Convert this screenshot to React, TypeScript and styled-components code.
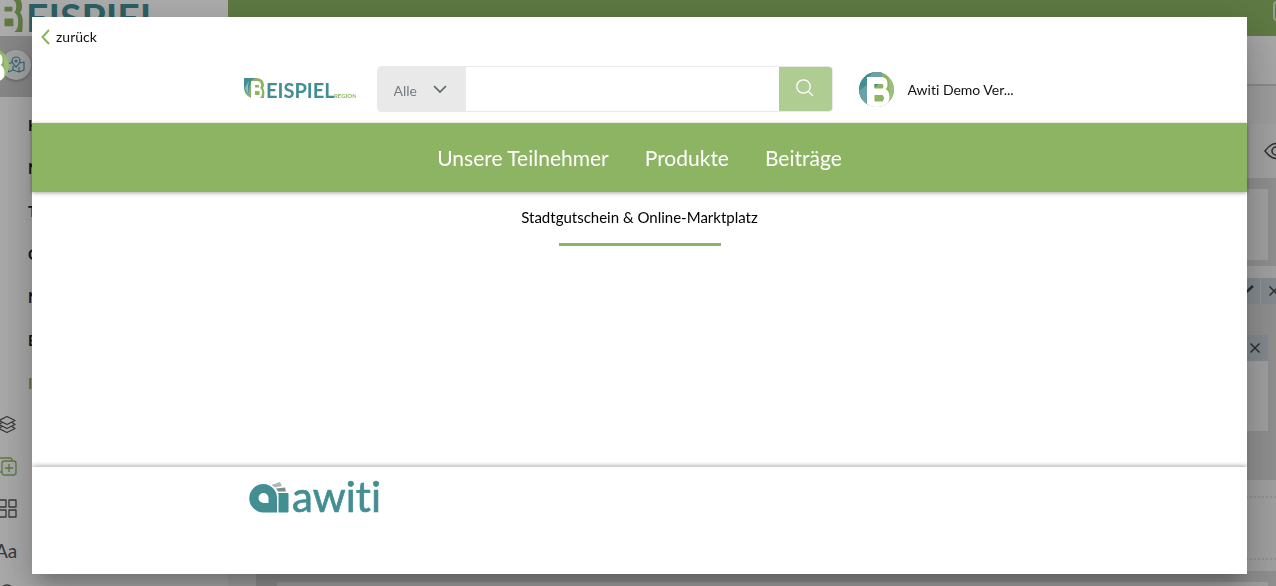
import React, { useId } from "react";
import styled, { createGlobalStyle } from "styled-components";

const GREEN = "#8cb463";
const TEAL = "#438e93";

const GlobalStyle = createGlobalStyle`
  *, *::before, *::after { box-sizing: border-box; }
  html, body, #root { height: 100%; }
  body {
    margin: 0;
    overflow: hidden;
    font-family: Lato, "Noto Sans", sans-serif;
    font-variant-ligatures: none;
    color: #111;
    background: #fff;
  }
  button, input, select { font: inherit; color: inherit; }
  a { color: inherit; text-decoration: none; }
`;

/* ---------- page behind the dialog ---------- */

const Page = styled.div`
  height: 100vh;
  overflow: hidden;
  display: flex;
  flex-direction: column;
`;

const TopBar = styled.div`
  display: flex;
  flex: 0 0 36px;
  overflow: hidden;
  background: ${GREEN};
  justify-content: space-between;
  box-shadow: 0 1px 2px rgba(0, 0, 0, 0.3);
`;

const TopLogo = styled.div`
  width: 228px;
  height: 36px;
  overflow: hidden;
  background: #fff;
  svg { display: block; margin: -7px 0 0 -17px; }
`;

const TopAction = styled.button`
  width: 24px;
  height: 20px;
  margin: 1px -21px 0 0;
  border: 2px solid #dde6d4;
  border-radius: 4px;
  background: none;
`;

const Body = styled.div`
  display: flex;
  flex: 1;
  min-height: 0;
`;

const Sidebar = styled.div`
  flex: 0 0 228px;
  display: flex;
  flex-direction: column;
  overflow: hidden;
  background: #fcfcfc;
`;

const Profile = styled.div`
  display: flex;
  align-items: center;
  flex: 0 0 61px;
  background: #c9c9c9;
  padding-bottom: 3px;
`;

const ProfileLogo = styled.div`
  margin-left: -26px;
  height: 35px;
  z-index: 1;
`;

const MapButton = styled.button`
  display: flex;
  align-items: center;
  justify-content: center;
  width: 30px;
  height: 30px;
  margin-left: -8px;
  padding: 0;
  border: 0;
  border-radius: 50%;
  background: #f4f4f4;
  box-shadow: 0 1px 3px rgba(0, 0, 0, 0.3);
`;

const SideContent = styled.div`
  display: flex;
  padding-top: 7px;
`;

const Rail = styled.div`
  display: flex;
  flex-direction: column;
  align-items: center;
  width: 20px;
  margin-left: -2px;
  padding-top: 310px;
  gap: 20px;
  svg { flex: 0 0 22px; }
`;

const Menu = styled.nav`
  display: flex;
  flex-direction: column;
  margin-left: 10px;
  font-size: 15px;
  font-weight: 700;
`;

const MenuLink = styled.a<{ $active?: boolean }>`
  line-height: 43px;
  color: ${(p) => (p.$active ? GREEN : "#222")};
`;

const Main = styled.div`
  flex: 1;
  display: flex;
  flex-direction: column;
  border-left: 9px solid #f2f2f2;
  background: #f2f2f2;
`;

const Band = styled.div<{ $h: number; $bg: string; $line?: boolean }>`
  display: flex;
  flex: 0 0 ${(p) => p.$h}px;
  align-items: center;
  justify-content: flex-end;
  background: ${(p) => p.$bg};
  border-bottom: ${(p) => (p.$line ? "2px solid #cfcfcf" : "0")};
`;

const EyeIcon = styled.svg`
  margin-right: -12px;
`;

const Canvas = styled.div<{ $h: number }>`
  flex: 0 0 ${(p) => p.$h}px;
  display: flex;
  flex-direction: column;
  padding: 11px 8px 6px 21px;
  margin-left: 19px;
  background: #d6d6d6;
`;

const Block = styled.div<{ $below?: number }>`
  flex: 1;
  margin-bottom: ${(p) => p.$below ?? 0}px;
  background: #efefef;
`;

const Tools = styled.div<{ $inset?: boolean }>`
  display: flex;
  flex: 0 0 26px;
  justify-content: flex-end;
  margin-top: ${(p) => (p.$inset ? "20px" : "0")};
  background: #c6ced6;
`;

const ToolButton = styled.button<{ $clip?: boolean }>`
  display: flex;
  align-items: center;
  justify-content: center;
  width: 26px;
  height: 26px;
  padding: 0;
  margin-right: ${(p) => (p.$clip ? "-10px" : "0")};
  border: 0;
  border-left: ${(p) => (p.$clip ? "1px solid #dfe4e8" : "0")};
  background: none;
`;

const Slot = styled.div`
  flex: 0 0 91px;
  padding: 16px 0 11px;
  background: #eee;
  div { height: 64px; border: 2px dotted #d8d8d8; border-width: 2px 0; }
`;

/* ---------- dialog ---------- */

const Backdrop = styled.div`
  position: fixed;
  inset: 0;
  display: flex;
  padding: 17px 29px 12px 32px;
  background: rgba(0, 0, 0, 0.32);
`;

const Dialog = styled.div`
  flex: 1;
  display: flex;
  flex-direction: column;
  min-width: 0;
  background: #fff;
  box-shadow: 0 11px 15px -7px rgba(0, 0, 0, 0.2),
    0 24px 38px 3px rgba(0, 0, 0, 0.14), 0 9px 46px 8px rgba(0, 0, 0, 0.12);
`;

const Back = styled.button`
  display: flex;
  align-items: center;
  align-self: flex-start;
  gap: 6px;
  height: 38px;
  padding: 1px 9px 0;
  border: 0;
  background: none;
  font-size: 14px;
`;

const Header = styled.header`
  display: flex;
  align-items: center;
  width: 100%;
  max-width: 792px;
  height: 68px;
  margin: 0 auto;
`;

const Brand = styled.a`
  display: block;
  height: 22px;
`;

const Search = styled.form`
  display: flex;
  width: 456px;
  height: 46px;
  margin: 0 26px 0 21px;
  border: 1px solid #eaeaea;
  border-radius: 4px;
  overflow: hidden;
`;

const SelectWrap = styled.label`
  display: flex;
  align-items: center;
  width: 88px;
  background: #e9e9e9;
  svg { margin-left: -33px; pointer-events: none; }
`;

const Select = styled.select`
  appearance: none;
  width: 88px;
  height: 44px;
  padding: 2px 0 0 16px;
  border: 0;
  background: none;
  color: #777c80;
  font-size: 14px;
`;

const Field = styled.input`
  flex: 1;
  min-width: 0;
  padding: 0 12px;
  border: 0;
  outline: 0;
`;

const SearchButton = styled.button`
  display: flex;
  align-items: center;
  justify-content: center;
  width: 53px;
  padding: 0 0 3px;
  border: 0;
  background: #afcc92;
`;

const Account = styled.a`
  display: flex;
  align-items: center;
  gap: 14px;
  padding-top: 1px;
  font-size: 14px;
  white-space: nowrap;
`;

const Nav = styled.nav`
  display: flex;
  justify-content: center;
  align-items: center;
  gap: 36px;
  flex: 0 0 69px;
  background: ${GREEN};
  box-shadow: 0 1px 4px rgba(0, 0, 0, 0.35);
  color: #fff;
  font-size: 21px;
`;

const Content = styled.main`
  flex: 1;
  display: flex;
  flex-direction: column;
  align-items: center;
`;

const Title = styled.h1`
  margin: 0;
  padding-top: 14px;
  font-size: 15px;
  line-height: 22px;
  font-weight: 400;
  color: #000;
`;

const Rule = styled.hr`
  width: 162px;
  height: 3px;
  margin: 15px 0 0;
  border: 0;
  background: ${GREEN};
`;

const Footer = styled.footer`
  flex: 0 0 107px;
  padding-top: 12px;
  box-shadow: 0 -1px 5px rgba(0, 0, 0, 0.35);
  clip-path: inset(-8px 0 0 0);
`;

const FooterInner = styled.div`
  width: 100%;
  max-width: 792px;
  margin: 0 auto;
  padding-left: 5px;
`;

/* ---------- drawings ---------- */

const RegionLogo = ({ width }: { width: number }) => (
  <svg width={width} height={Math.round((width * 22) / 112)} viewBox="0 0 112 22" aria-label="Beispiel Region">
    <path d="M0 0h13q7 1 7 7q0 2-1 3q2 2 1 10H7Q0 17 0 9z" fill={GREEN} />
    <path d="M0 0h12Q5 1 5 17Q0 14 0 8z" fill={TEAL} />
    <path d="M5 3Q3 8 5 17Q2 14 1 10z" fill="#91bfc1" />
    <path d="M7 3h6q4 0 4 4q0 2-1 3q2 1 2 5q0 5-4 6v1H7z" fill="#fff" />
    <path d="M11 7h4v2.500h-4zM11 13h4.500v4h-4.500z" fill={GREEN} />
    <text x="22" y="20" fontFamily="Lato, sans-serif" fontWeight="700" fontSize="20" fill={TEAL}>EISPIEL</text>
    <text x="90" y="20" fontFamily="Lato, sans-serif" fontWeight="700" fontSize="6" fill={GREEN}>REGION</text>
  </svg>
);

const Emblem = () => {
  const clip = useId();
  return (
    <svg width="35" height="35" viewBox="0 0 35 35" aria-hidden="true">
      <clipPath id={clip}><circle cx="17.500" cy="17.500" r="17.500" /></clipPath>
      <g clipPath={`url(#${clip})`}>
        <path d="M0 0h35v35H0z" fill={GREEN} />
        <path d="M0 0H23L22 8H9V35H0z" fill={TEAL} />
        <path d="M9 6L14 0H24L22 6z" fill="#6ba2a6" />
        <path d="M0 19L9 12V35H0z" fill="#6ba2a6" />
        <path d="M29 5Q36 13 35 21Q33 28 29 31Q32 22 30 17Q31 10 29 5z" fill="#9ac07b" />
        <path d="M8 5h14q6.500 0 6.500 7q0 4-2 5q4 2 4 7.500q0 7.500-6 10.500H8z" fill="#fff" />
        <path d="M15.500 12h8q2 2 0 4.500h-8zM15.500 23h8q3 3 0 6.500h-8z" fill={GREEN} />
        <path d="M15.500 12h4l-4 4z" fill={TEAL} />
      </g>
    </svg>
  );
};

const AwitiLogo = () => (
  <svg width="136" height="34" viewBox="0 0 136 34" aria-label="awiti">
    <path fillRule="evenodd" d="M14.500 5A14 14 0 0 1 28 19V33.500H14.500A14.200 14.200 0 0 1 14.500 5zM14.500 14A5 5 0 0 0 14.500 24H19.500V19A5 5 0 0 0 14.500 14z" fill={TEAL} />
    <path d="M29 14H38.500Q39.500 14 39.500 15V32.500Q39.500 33.500 38.500 33.500H29.500V19Q30 16 29 14z" fill={TEAL} />
    <path d="M22.500 6L31 3L33 7L26 8.500z" fill="#abb9b8" />
    <path d="M27 9.500L36 8.500L37 12.500H29z" fill="#778e8d" />
    <text x="43" y="33" fontFamily="Lato, sans-serif" fontSize="42" fill={TEAL} stroke={TEAL} strokeWidth="0.700">awiti</text>
  </svg>
);

const Cross = () => (
  <svg width="12" height="12" viewBox="0 0 12 12" fill="none" stroke="#444" strokeWidth="1.500">
    <path d="M1.500 1.500l9 9M10.500 1.500l-9 9" />
  </svg>
);

const RailIcon = ({ children, color = "#555" }: { children: React.ReactNode; color?: string }) => (
  <svg width="20" height="22" viewBox="0 0 20 22" fill="none" stroke={color} strokeWidth="1.300" strokeLinejoin="round">
    {children}
  </svg>
);

const menu = ["H", "N", "T", "G", "N", "B", "I"];

export default function App() {
  return (
    <>
      <GlobalStyle />
      <Page>
        <TopBar>
          <TopLogo><RegionLogo width={219} /></TopLogo>
          <TopAction aria-label="Menü" />
        </TopBar>
        <Body>
          <Sidebar>
            <Profile>
              <ProfileLogo><Emblem /></ProfileLogo>
              <MapButton aria-label="Karte">
                <svg width="18" height="18" viewBox="0 0 18 18" fill="none" stroke="#4b9bad" strokeWidth="1.200" strokeLinejoin="round">
                  <path d="M6 6L1 8v8l5-2 6 2 5-2V6l-4 1M6 10v4M12 11v5M9 11Q5 7 5 5a4 4 0 0 1 8 0q0 2-4 6z" />
                  <circle cx="9" cy="5" r="1" />
                </svg>
              </MapButton>
            </Profile>
            <SideContent>
              <Rail>
                <RailIcon><path d="M9 2.500l8 4-8 4-8-4zM4 8.500l-3 2 8 4 8-4-3-2M4 12.500l-3 2 8 4 8-4-3-2" /></RailIcon>
                <RailIcon color={GREEN}><rect x="4" y="5" width="14" height="14" rx="2.500" /><path d="M14 5V4q0-2-2-2H0M0 16h4M11 8v8M7 12h8" /></RailIcon>
                <RailIcon><path d="M1 2h7v7H1zM11 2h7v7h-7zM1 12h7v7H1zM11 12h7v7h-7z" /></RailIcon>
                <RailIcon>
                  <text x="-3" y="18" fontFamily="Lato, sans-serif" fontSize="19" fill="#555" stroke="none">Aa</text>
                </RailIcon>
                <RailIcon><circle cx="9" cy="10" r="7" /></RailIcon>
              </Rail>
              <Menu>
                {menu.map((m, i) => (
                  <MenuLink key={i} href="#" $active={i === menu.length - 1}>{m}</MenuLink>
                ))}
              </Menu>
            </SideContent>
          </Sidebar>
          <Main>
            <Band $h={50} $bg="#f7f7f7" $line />
            <Band $h={38} $bg="#eaeaea" />
            <Band $h={54} $bg="#f0f0f0">
              <EyeIcon width="24" height="20" viewBox="0 0 24 20" fill="none" stroke="#444" strokeWidth="1.500">
                <path d="M1 10Q12-5 23 10Q12 25 1 10z" /><circle cx="12" cy="10" r="4" />
              </EyeIcon>
            </Band>
            <Canvas $h={88}><Block /></Canvas>
            <Band $h={12} $bg="#efefef" />
            <Tools>
              <ToolButton aria-label="Bearbeiten">
                <svg width="24" height="12" viewBox="0 0 24 12" stroke="#444" strokeWidth="2.500"><path d="M7 11L18 1" /></svg>
              </ToolButton>
              <ToolButton $clip aria-label="Entfernen"><Cross /></ToolButton>
            </Tools>
            <Canvas $h={176}>
              <Tools $inset><ToolButton aria-label="Schließen"><Cross /></ToolButton></Tools>
              <Block $below={43} />
            </Canvas>
            <Slot><div /></Slot>
            <Canvas $h={88}><Block /></Canvas>
          </Main>
        </Body>
      </Page>
      <Backdrop>
        <Dialog role="dialog" aria-modal="true">
          <Back>
            <svg width="9" height="16" viewBox="0 0 9 16" fill="none" stroke={GREEN} strokeWidth="2"><path d="M8 1L1.500 8L8 15" /></svg>
            zurück
          </Back>
          <Header>
            <Brand href="#" aria-label="Beispiel Region"><RegionLogo width={112} /></Brand>
            <Search>
              <SelectWrap>
                <Select aria-label="Kategorie" defaultValue="Alle"><option>Alle</option></Select>
                <svg width="14" height="9" viewBox="0 0 14 9" fill="none" stroke="#5d656b" strokeWidth="1.700"><path d="M1 1l6 6 6-6" /></svg>
              </SelectWrap>
              <Field type="search" aria-label="Suche" />
              <SearchButton aria-label="Suchen">
                <svg width="18" height="18" viewBox="0 0 18 18" fill="none" stroke="#fff" strokeWidth="1.300"><circle cx="7.500" cy="7.500" r="6.700" /><path d="M12 12l5 5" /></svg>
              </SearchButton>
            </Search>
            <Account href="#"><Emblem />Awiti Demo Ver...</Account>
          </Header>
          <Nav>
            <a href="#">Unsere Teilnehmer</a>
            <a href="#">Produkte</a>
            <a href="#">Beiträge</a>
          </Nav>
          <Content>
            <Title>Stadtgutschein &amp; Online-Marktplatz</Title>
            <Rule />
          </Content>
          <Footer><FooterInner><AwitiLogo /></FooterInner></Footer>
        </Dialog>
      </Backdrop>
    </>
  );
}
